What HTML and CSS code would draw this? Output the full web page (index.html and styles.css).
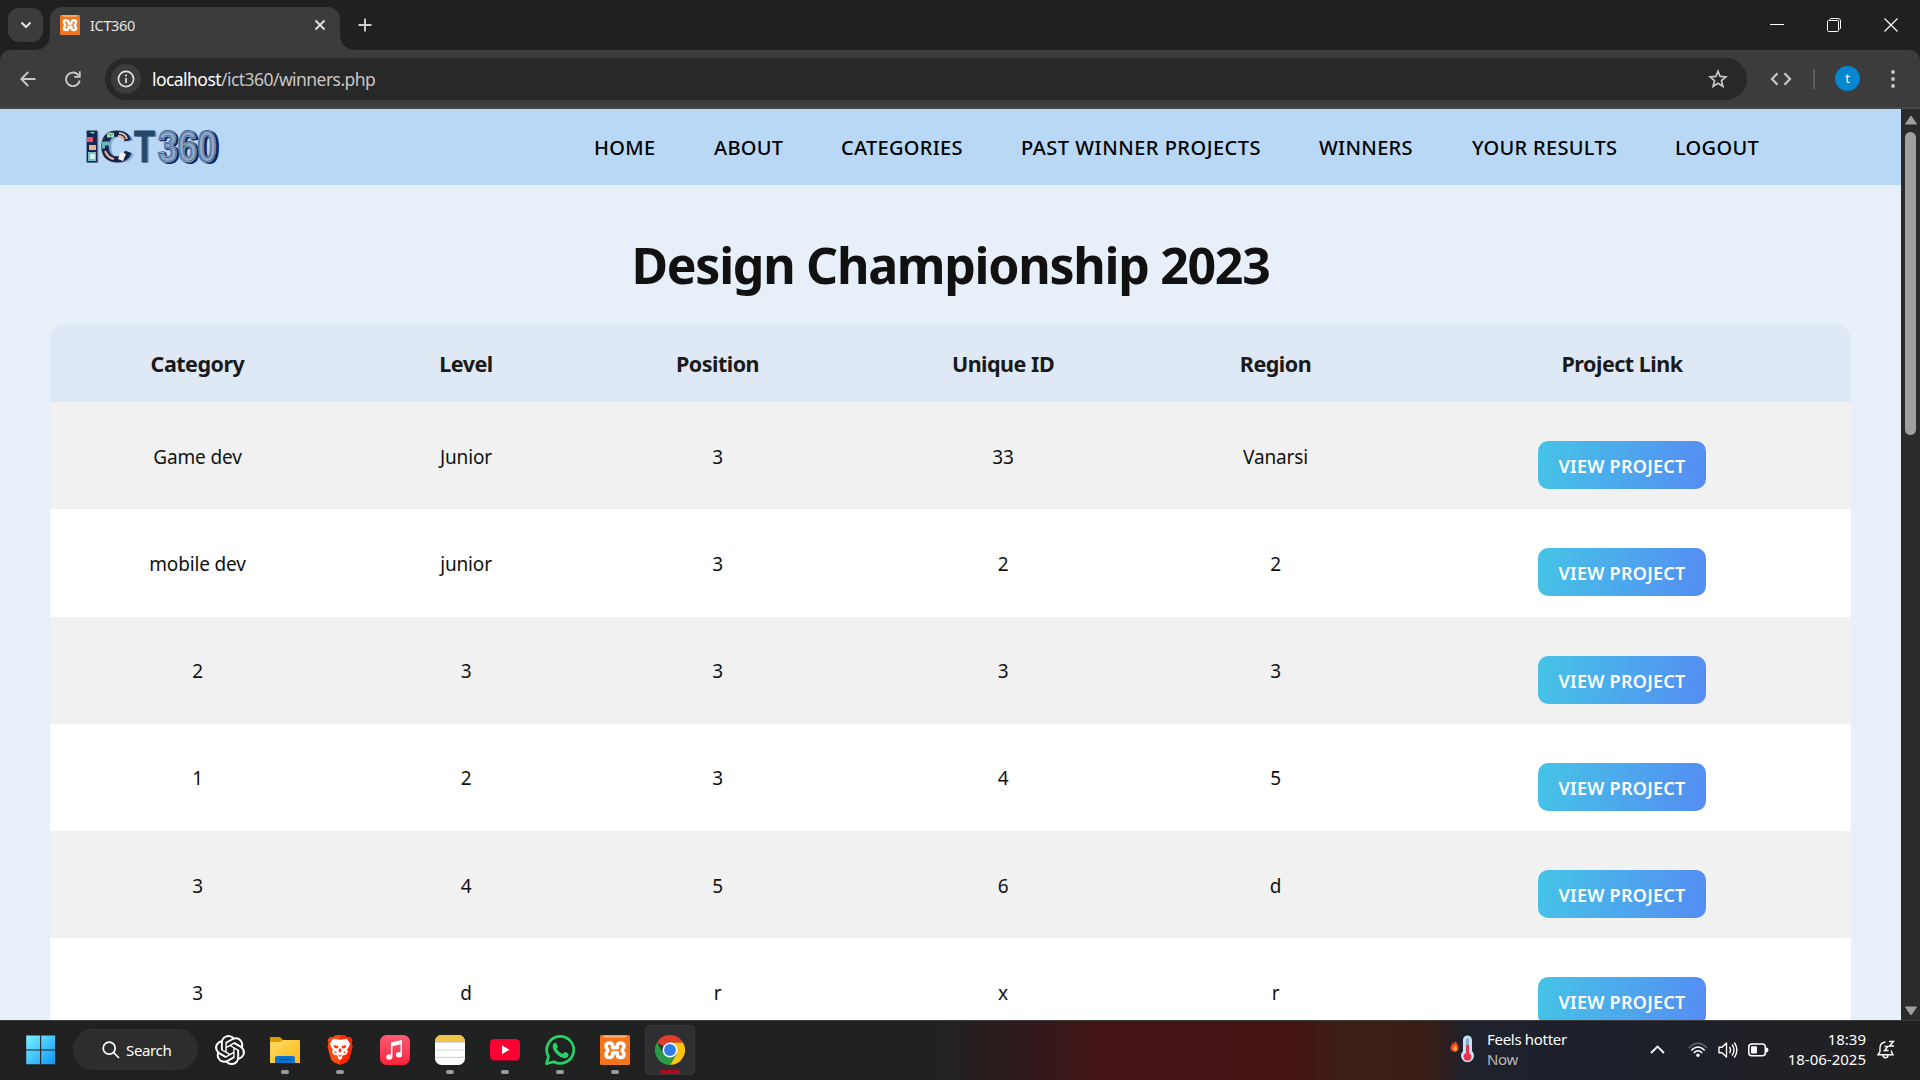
FILE: index.html
```html
<!DOCTYPE html>
<html lang="en">
<head>
<meta charset="utf-8">
<title>ICT360</title>
<link rel="stylesheet" href="styles.css">
</head>
<body>
<header class="tabstrip">
  <button class="tab-search" aria-label="Search tabs"><svg width="12" height="8" viewBox="0 0 12 8"><path d="M1.500 1.500 6 6 10.500 1.500" fill="none" stroke="#e3e3e3" stroke-width="2"/></svg></button>
  <div class="tab">
    <svg class="favicon" width="20" height="20" viewBox="0 0 30 30"><use href="#xampp"/></svg>
    <span class="tab-title">ICT360</span>
    <svg class="tab-close" width="12" height="12" viewBox="0 0 12 12"><path d="M1.5 1.5 10.5 10.5M10.5 1.5 1.5 10.5" stroke="#e3e3e3" stroke-width="1.8"/></svg>
  </div>
  <svg class="tab-new" width="14" height="14" viewBox="0 0 14 14"><path d="M7 .5V13.500M.5 7H13.500" stroke="#d0d0d0" stroke-width="1.9"/></svg>
  <div class="window-controls">
    <svg width="14" height="14" viewBox="0 0 14 14"><path d="M0 6.500H14" stroke="#fff"/></svg>
    <svg width="14" height="14" viewBox="0 0 14 14" fill="none" stroke="#fff"><path d="M3 2.500V1.500Q3 .5 4 .5H11Q13.500 .5 13.500 3V10Q13.500 11 12.500 11"/><rect x=".5" y="2.500" width="11" height="11" rx="1"/></svg>
    <svg width="14" height="14" viewBox="0 0 14 14"><path d="M.5 .5 13.500 13.500M13.500 .5 .5 13.500" stroke="#fff" stroke-width="1.200"/></svg>
  </div>
</header>
<div class="toolbar">
  <svg class="back" width="16" height="16" viewBox="0 0 16 16" fill="none" stroke="#c7c7c7" stroke-width="1.900"><path d="M15.500 8H1.800M8.200 1 1.300 8 8.200 15"/></svg>
  <svg class="reload" width="16" height="16" viewBox="0 0 16 16"><path d="M13.600 4.600A6.800 6.800 0 1 0 14.600 9.500" fill="none" stroke="#c7c7c7" stroke-width="1.900"/><path d="M15.700 .3V6.800H9.200V5H13.900V.3Z" fill="#c7c7c7"/></svg>
  <div class="address">
    <span class="site-info"><svg width="18" height="18" viewBox="0 0 18 18"><circle cx="9" cy="9" r="7.600" fill="none" stroke="#e3e3e3" stroke-width="1.600"/><path d="M9 8V13" stroke="#e3e3e3" stroke-width="1.700"/><circle cx="9" cy="5.500" r="1.050" fill="#e3e3e3"/></svg></span>
    <span class="url"><b>localhost</b>/ict360/winners.php</span>
    <svg class="star" width="20" height="20" viewBox="0 0 20 20"><path d="M10 2.300 12.100 7.400 18 7.900 13.500 11.600 14.900 17.300 10 14.200 5.100 17.300 6.500 11.600 2 7.900 7.900 7.400Z" fill="none" stroke="#c7c7c7" stroke-width="1.700"/></svg>
  </div>
  <svg class="code" width="22" height="14" viewBox="0 0 22 14" fill="none" stroke="#c7c7c7" stroke-width="2.200"><path d="M7.500 1.200 2 7 7.500 12.800M14.500 1.200 20 7 14.500 12.800"/></svg>
  <span class="divider"></span>
  <span class="avatar">t</span>
  <svg class="kebab" width="6" height="20" viewBox="0 0 6 20" fill="#c7c7c7"><circle cx="3" cy="3" r="1.900"/><circle cx="3" cy="10" r="1.900"/><circle cx="3" cy="17" r="1.900"/></svg>
</div>

<div class="viewport">
<div class="page">
  <nav class="site-nav">
    <svg class="logo" width="152" height="60" viewBox="-6 -10 152 60" role="img" aria-label="ICT360">
      <g class="logo-shadow"><text x="-1" y="36" textLength="18" lengthAdjust="spacingAndGlyphs">I</text><text x="17" y="36" textLength="32" lengthAdjust="spacingAndGlyphs">C</text><text x="50" y="36" textLength="21" lengthAdjust="spacingAndGlyphs">T</text></g>
      <g class="logo-dark"><text x="-3" y="35" textLength="18" lengthAdjust="spacingAndGlyphs">I</text><text x="14" y="35" textLength="32" lengthAdjust="spacingAndGlyphs">C</text></g>
      <text class="logo-t" x="48" y="35" textLength="21" lengthAdjust="spacingAndGlyphs">T</text>
      <text class="logo-depth" x="73.500" y="36" textLength="60" lengthAdjust="spacingAndGlyphs">360</text>
      <text class="logo-num" x="72" y="34.500" textLength="59" lengthAdjust="spacingAndGlyphs">360</text>
      <text class="logo-line" x="72" y="34.500" textLength="59" lengthAdjust="spacingAndGlyphs">360</text>
      <path d="M3 5h6l-2 2z" fill="#7fc9b8"/><path d="M1 10h6v5H1z" fill="#e4576b"/><path d="M3 18h7v5H3z" fill="#e8b48b"/><path d="M2 25h8v9H2z" fill="#6cc5c3"/><path d="M4 27h5v5H4z" fill="#d8eee8"/>
      <path d="M21 5.500h7v5h-7z" fill="#9fe0b0"/><path d="m21 5.500 3.500 3 3.500-3" fill="none" stroke="#2a5560" stroke-width=".7"/><path d="M16 14.500h7v4h-4v3h-3z" fill="#63b9bd"/><path d="M19 24q3 7 9 8M33 6q6 0 8 6M32 9q5 0 6 4" fill="none" stroke="#e5b798" stroke-width="2"/><path d="m35 25 5 2-3 7-5-2z" fill="#f5f1ee"/>
    </svg>
    <ul class="links">
      <li class="l1">HOME</li><li class="l2">ABOUT</li><li class="l3">CATEGORIES</li><li class="l4">PAST WINNER PROJECTS</li><li class="l5">WINNERS</li><li class="l6">YOUR RESULTS</li><li class="l7">LOGOUT</li>
    </ul>
  </nav>
  <h1>Design Championship 2023</h1>
  <table class="winners">
    <colgroup><col class="c1"><col class="c2"><col class="c3"><col class="c4"><col class="c5"><col class="c6"></colgroup>
    <thead><tr><th>Category</th><th>Level</th><th>Position</th><th>Unique ID</th><th>Region</th><th>Project Link</th></tr></thead>
    <tbody>
      <tr><td>Game dev</td><td>Junior</td><td>3</td><td>33</td><td>Vanarsi</td><td><a class="view">VIEW PROJECT</a></td></tr>
      <tr><td>mobile dev</td><td>junior</td><td>3</td><td>2</td><td>2</td><td><a class="view">VIEW PROJECT</a></td></tr>
      <tr><td>2</td><td>3</td><td>3</td><td>3</td><td>3</td><td><a class="view">VIEW PROJECT</a></td></tr>
      <tr><td>1</td><td>2</td><td>3</td><td>4</td><td>5</td><td><a class="view">VIEW PROJECT</a></td></tr>
      <tr><td>3</td><td>4</td><td>5</td><td>6</td><td>d</td><td><a class="view">VIEW PROJECT</a></td></tr>
      <tr><td>3</td><td>d</td><td>r</td><td>x</td><td>r</td><td><a class="view">VIEW PROJECT</a></td></tr>
    </tbody>
  </table>
</div>
<div class="scrollbar">
  <svg width="14" height="10" viewBox="0 0 14 10"><path d="M7 1 12.500 9H1.500Z" fill="#9f9f9f" stroke="#9f9f9f" stroke-linejoin="round"/></svg>
  <span class="thumb"></span>
  <svg class="down" width="14" height="10" viewBox="0 0 14 10"><path d="M7 9 12.500 1H1.500Z" fill="#9f9f9f" stroke="#9f9f9f" stroke-linejoin="round"/></svg>
</div>
</div>

<footer class="taskbar">
  <svg class="start" width="30" height="30" viewBox="0 0 30 30"><defs><linearGradient id="win" x1="0" y1="0" x2="30" y2="30" gradientUnits="userSpaceOnUse"><stop offset="0" stop-color="#7df3ff"/><stop offset="1" stop-color="#0a93fa"/></linearGradient></defs><path d="M.2 .5h13.900v13.900H.2zM15.200 .5h13.900v13.900H15.200zM.2 15.400h13.900v13.900H.2zM15.200 15.400h13.900v13.900H15.200z" fill="url(#win)"/></svg>
  <div class="search"><svg width="18" height="18" viewBox="0 0 18 18" fill="none" stroke="#fff" stroke-width="1.700"><circle cx="7.200" cy="7.200" r="6"/><path d="m11.500 11.500 5.500 5.500"/></svg><span>Search</span></div>
  <div class="app"><svg width="30" height="30" viewBox="0 0 24 24" fill="#fff"><path d="M22.280 9.820a5.980 5.980 0 0 0-.520-4.910 6.050 6.050 0 0 0-6.510-2.900A6.070 6.070 0 0 0 4.980 4.180a5.980 5.980 0 0 0-4 2.900 6.050 6.050 0 0 0 .740 7.100 5.980 5.980 0 0 0 .510 4.910 6.050 6.050 0 0 0 6.520 2.900A5.980 5.980 0 0 0 13.260 24a6.060 6.060 0 0 0 5.770-4.210 5.990 5.990 0 0 0 4-2.900 6.060 6.060 0 0 0-.750-7.070zm-9.020 12.610a4.480 4.480 0 0 1-2.880-1.040l.140-.080 4.780-2.760a.8.8 0 0 0 .390-.680v-6.740l2.020 1.170a.07.07 0 0 1 .040.050v5.580a4.500 4.500 0 0 1-4.490 4.500zm-9.660-4.130a4.470 4.470 0 0 1-.530-3.010l.140.080 4.780 2.760a.77.77 0 0 0 .780 0l5.840-3.370v2.330a.08.08 0 0 1-.030.060L9.740 19.950a4.500 4.500 0 0 1-6.140-1.650zM2.340 7.900a4.490 4.490 0 0 1 2.370-1.970v5.680a.77.77 0 0 0 .390.680l5.810 3.350-2.020 1.170a.08.08 0 0 1-.070 0l-4.830-2.790A4.500 4.500 0 0 1 2.340 7.870zm16.600 3.860-5.840-3.390 2.020-1.160a.08.08 0 0 1 .070 0l4.830 2.790a4.490 4.490 0 0 1-.680 8.100v-5.680a.79.79 0 0 0-.400-.660zm2.010-3.030-.140-.080-4.770-2.780a.78.78 0 0 0-.790 0L9.410 9.230V6.900a.07.07 0 0 1 .030-.060l4.830-2.790a4.500 4.500 0 0 1 6.680 4.660zM8.310 12.860l-2.020-1.160a.08.08 0 0 1-.040-.060V6.070a4.500 4.500 0 0 1 7.380-3.450l-.140.080-4.780 2.760a.8.8 0 0 0-.390.680zm1.100-2.370 2.600-1.500 2.610 1.500v3l-2.600 1.500-2.610-1.500z"/></svg></div>
  <div class="app run"><svg width="30" height="30" viewBox="0 0 30 30"><defs><linearGradient id="fold" x2="1" y2="1"><stop stop-color="#ffdc66"/><stop offset="1" stop-color="#fbb916"/></linearGradient></defs><path d="M0 3q0-1 1-1h8q1 0 2 1l2 2v7H0z" fill="#dd9b00"/><path d="M0 8q0-1 1-1h9l3-2h16q1 0 1 1v22H0z" fill="url(#fold)"/><path d="M5 28v-5q0-2 2-2h16q2 0 2 2v5z" fill="#0c74ce"/><path d="M9 24.500h12" stroke="#0a4f93" stroke-width="1.200"/></svg></div>
  <div class="app run"><svg width="30" height="30" viewBox="0 0 30 30"><path d="m15 0 5 .2 2 2 3-.2 2.500 3-1 2.500 1 4-3.500 13-3 3-6 2.300L9 27.500l-3-3-3.500-13 1-4-1-2.500L5 2l3 .2 2-2z" fill="#ff4a10"/><path d="m15 0 5 .2 2 2 3-.2 2.500 3-1 2.500 1 4-3.500 13-3 3-6 2.300z" fill="#ff2500"/><path d="m15 4.800 7-1 3 5-1 3-2 3 1 2-2 3-4 1 .5 2-2.500 2.500L12.500 22.800l.5-2-4-1-2-3 1-2-2-3-1-3 3-5z" fill="#fff"/><path d="m8.500 10 5 1-.8 2.500-3-.5zM21.500 10l-5 1 .8 2.500 3-.5zM12.500 19l2.500 1.500 2.500-1.500-2.500 3zM14 13.500h2l.5 3-1.500 1-1.500-1zM9 16l3 1.500-2 .8zM21 16l-3 1.500 2 .8z" fill="#ff3310"/></svg></div>
  <div class="app"><svg width="30" height="30" viewBox="0 0 30 30"><defs><linearGradient id="mus" x2="0" y2="1"><stop stop-color="#fb5c74"/><stop offset="1" stop-color="#fa233b"/></linearGradient></defs><rect width="30" height="30" rx="6.500" fill="url(#mus)"/><path d="M21.300 6V19.500M11.700 8V21.500" fill="none" stroke="#fff" stroke-width="1.500"/><path d="m11 7.500 11-2.500v4L11 11.500z" fill="#fff"/><ellipse cx="9.300" cy="22" rx="3.100" ry="2.700" fill="#fff"/><ellipse cx="19" cy="19.700" rx="3.100" ry="2.700" fill="#fff"/></svg></div>
  <div class="app run"><svg width="30" height="30" viewBox="0 0 30 30"><defs><clipPath id="note"><rect width="30" height="30" rx="6.500"/></clipPath></defs><g clip-path="url(#note)"><path d="M0 0h30v30H0z" fill="#fff"/><path d="M0 0h30v7H0z" fill="#f0c548"/><path d="M0 7.500h30M0 15h30M0 22.300h30" stroke="#d5d5d5" stroke-width="1.200"/></g></svg></div>
  <div class="app run"><svg width="30" height="30" viewBox="0 0 30 30"><rect y="4" width="30" height="21.500" rx="4.500" fill="#ff0033"/><path d="m12 10.500 7.500 4.300-7.500 4.400z" fill="#fff"/></svg></div>
  <div class="app run"><svg width="30" height="30" viewBox="0 0 30 30"><path d="M1.500 28.700 3.500 21.500A13.500 13.500 0 1 1 8.800 26.700Z" fill="none" stroke="#25d366" stroke-width="2.700" stroke-linejoin="round"/><path d="M9.200 8q1-.8 2 0l1.600 3.600q.2.800-1.200 2.200 2.200 4 6 5.300l1.600-1.800q.5-.6 1.200-.2l3 1.600q.8 2.800-2.200 4.200-4 1.200-8.800-3.200Q7.300 15 7.700 11q.3-2 1.500-3z" fill="#25d366"/></svg></div>
  <div class="app run"><svg width="30" height="30" viewBox="0 0 30 30"><g id="xampp"><rect width="30" height="30" rx="1.500" fill="#f3761f"/><path d="M3 .5h24l-2 2H5z" fill="#ffb27a"/><path d="M12.700 12.700V10.800C12.700 7 6 7 6 11C6 13.300 7.800 13.600 7.800 15.200C7.800 16.800 6 17.200 6 19.500C6 23.500 12.700 23.500 12.700 19.500V17.700H17.300V19.500C17.300 23.500 24 23.500 24 19.500C24 17.200 22.200 16.800 22.200 15.200C22.200 13.600 24 13.300 24 11C24 7 17.300 7 17.300 10.800V12.700Z" fill="none" stroke="#fff" stroke-width="3.600" stroke-linejoin="round"/></g></svg></div>
  <div class="app active"><svg width="30" height="30" viewBox="0 0 30 30"><path d="M15 15 2 7.500A15 15 0 0 1 28 7.500H15Z" fill="#e33b2e"/><path d="M15 7.500H28A15 15 0 0 1 15 30L21.500 18.750Z" fill="#fcc314"/><path d="M2 7.500A15 15 0 0 0 15 30L21.500 18.750 15 15 8.500 18.750Z" fill="#2a9c48"/><circle cx="15" cy="15" r="7.500" fill="#fff"/><circle cx="15" cy="15" r="5.900" fill="#2f7de9"/></svg></div>
  <div class="weather">
    <svg width="24" height="30" viewBox="0 0 24 30"><path d="M5 17Q0 16 .5 11.500 2 10 2.500 7.500L4 9q.5-2 2-3 0 2 2 4 2 6-3 7" fill="#ee4a27"/><path d="M5 16q-2-1-2-3 2-1 2-3 2 2 2 4 0 1.500-2 2" fill="#ffb72a"/><path d="M13 5a4.500 4.500 0 0 1 9 0V16a6.500 6.500 0 1 1-9 0Z" fill="#c5e2fa"/><path d="M16 4.500a1.500 1.500 0 0 1 3 0V10H16z" fill="#8fa9c2"/><path d="M16 10h3v8a4 4 0 1 1-3 0z" fill="#e8344f"/></svg>
    <div class="weather-text"><span>Feels hotter</span><span class="muted">Now</span></div>
  </div>
  <div class="tray">
    <svg class="chev" width="15" height="9" viewBox="0 0 15 9"><path d="M1 8 7.500 1.500 14 8" fill="none" stroke="#fff" stroke-width="1.800"/></svg>
    <svg class="wifi" width="20" height="16" viewBox="0 0 20 16" fill="none" stroke="#fff" stroke-width="1.500"><path d="M1 6Q10-3.500 19 6" stroke="#666"/><path d="M3.300 8.500Q10 1.500 16.700 8.500M5.800 11Q10 6.500 14.200 11"/><circle cx="10" cy="13.300" r="1.700" fill="#fff" stroke="none"/></svg>
    <svg class="vol" width="20" height="18" viewBox="0 0 20 18" fill="none" stroke="#fff" stroke-width="1.400"><path d="M1 6.200H4L8.500 2V16L4 11.800H1Z" stroke-linejoin="round"/><path d="M11.500 6Q13.500 9 11.500 12M14 3.500Q18 9 14 14.500M16.300 1.500Q21.500 9 16.300 16.500"/></svg>
    <svg class="bat" width="21" height="14" viewBox="0 0 21 14"><rect x=".8" y="1" width="16.500" height="11.800" rx="3" fill="none" stroke="#fff" stroke-width="1.500"/><rect x="3" y="3.200" width="6" height="7.400" rx="1" fill="#fff"/><path d="M18 4.500q2.500 0 2.500 2.400T18 9.500z" fill="#fff"/></svg>
    <div class="clock"><span>18:39</span><span>18-06-2025</span></div>
    <svg class="bell" width="18" height="19" viewBox="0 0 18 19" fill="none" stroke="#fff" stroke-width="1.400"><path d="M8.500 2Q3 2.500 3 8V11.500L1 14.800H16L14.500 12V10.500M6 15q0 2.700 2.500 2.700T11 15"/><path d="M7.500 6.500H11L7.500 10.500H11.500M12 1.500H16.500L12.500 6H17"/></svg>
  </div>
</footer>
</body>
</html>
```
FILE: styles.css
```css
* { box-sizing: border-box; }
body { margin: 0; width: 1920px; height: 1080px; overflow: hidden; display: flex; flex-direction: column; font-family: "Noto Sans", "Open Sans", sans-serif; background: #1f2121; }
svg { display: block; flex: none; }

.tabstrip { height: 50px; flex: none; display: flex; align-items: center; background: #1f2121; padding: 0 7px 0 8px; }
.tab-search { width: 35px; height: 34px; border: 0; padding: 0; border-radius: 11px; background: #3c3c3c; display: grid; place-items: center; }
.tab { position: relative; align-self: flex-end; width: 290px; height: 43px; margin-left: 7px; padding: 0 14px 7px 10px; border-radius: 12px 12px 0 0; background: #3c3c3c; display: flex; align-items: center; }
.tab::before, .tab::after { content: ""; position: absolute; bottom: 0; width: 14px; height: 14px; }
.tab::before { left: -14px; background: radial-gradient(circle at 0 0, transparent 13.5px, #3c3c3c 14px); }
.tab::after { right: -14px; background: radial-gradient(circle at 100% 0, transparent 13.5px, #3c3c3c 14px); }
.tab-title { margin-left: 10px; font-size: 14.5px; letter-spacing: -.35px; color: #e3e3e3; }
.tab-close { margin-left: auto; }
.tab-new { margin-left: 18px; }
.window-controls { margin-left: auto; display: flex; gap: 43px; padding-right: 15px; }

.toolbar { height: 59px; flex: none; display: flex; align-items: center; background: #3c3c3c; border-radius: 10px 10px 0 0; border-bottom: 2px solid #474747; padding: 0 24px 0 20px; }
.reload { margin-left: 29px; }
.address { width: 1642px; height: 42px; margin-left: 24px; border-radius: 21px; background: #282828; display: flex; align-items: center; padding: 0 19px 0 6px; }
.site-info { width: 30px; height: 30px; border-radius: 50%; background: #3c3c3c; display: grid; place-items: center; }
.url { margin-left: 11px; font-size: 17.5px; letter-spacing: -.55px; color: #c7c7c7; }
.url b { font-weight: 400; color: #fff; }
.star { margin-left: auto; }
.code { margin-left: 23px; }
.divider { width: 2px; height: 20px; margin-left: 21px; background: #5e5e5e; }
.avatar { width: 25px; height: 25px; margin-left: 20px; border-radius: 50%; background: #0288d1; color: #fff; font-size: 13px; line-height: 24px; text-align: center; }
.kebab { margin-left: auto; }

.viewport { height: 911px; flex: none; display: flex; }
.page { width: 1901px; overflow: hidden; background: #e7f0f8; }
.site-nav { height: 76px; display: flex; align-items: center; justify-content: space-between; padding: 0 143px 0 80px; background: #b8d8f5; }
.logo text { font: bold 44px "Liberation Sans", Arial, sans-serif; }
.logo-shadow { fill: #8fa8c4; }
.logo-dark { fill: #152550; stroke: #152550; stroke-width: 1; }
.logo-t { fill: #24496a; stroke: #24496a; stroke-width: 1; }
.logo-depth { fill: #14265a; stroke: #14265a; stroke-width: 2; }
.logo-num { fill: #8ea9c9; stroke: #33507c; stroke-width: 2; }
.logo-line { fill: none; stroke: #a9c3e0; stroke-width: .6; }
.links { margin: 0; padding: 0; list-style: none; display: flex; gap: 58px; font-size: 20px; font-weight: 500; letter-spacing: .3px; color: #000; white-space: nowrap; }
.l1 { width: 62px; } .l2 { width: 69px; } .l3 { width: 122px; } .l4 { width: 240px; letter-spacing: .5px; } .l5 { width: 95px; } .l6 { width: 145px; } .l7 { width: 83px; }
h1 { margin: 46px 0 24px; height: 69px; line-height: 69px; font-size: 50px; font-weight: 700; letter-spacing: -1.28px; text-align: center; color: #111; }
.winners { width: 1801px; margin: 0 auto; table-layout: fixed; border-spacing: 0; border-radius: 16px 16px 0 0; overflow: hidden; text-align: center; }
.c1 { width: 295px; } .c2 { width: 242px; } .c3 { width: 261px; } .c4 { width: 310px; } .c5 { width: 235px; } .c6 { width: 458px; }
th { height: 78px; padding: 0; background: #dfe9f5; font-size: 21.5px; letter-spacing: -.5px; color: #1a1a1a; }
tbody tr { background: #fff; }
tbody tr:nth-child(odd) { background: #f1f1f1; }
td { height: 107.25px; padding: 2px 0 0; font-size: 19px; letter-spacing: -.15px; color: #111; }
.view { display: flex; align-items: center; justify-content: center; width: 168px; height: 48px; margin: 17px auto 0; padding-top: 2px; border-radius: 10px; background: linear-gradient(100deg, #45c4e6, #558cf3); color: #fff; font-size: 18px; font-weight: 600; letter-spacing: .25px; white-space: nowrap; }
.scrollbar { width: 19px; background: #2b2b2b; display: flex; flex-direction: column; align-items: center; padding: 6px 0 4px; }
.thumb { width: 11px; height: 303px; margin-top: 7px; border-radius: 6px; background: #9f9f9f; }
.down { margin-top: auto; }

.taskbar { height: 60px; flex: none; display: flex; align-items: center; padding: 0 25px 2px 26px; color: #fff; border-top: 1px solid #3b3d3f; background: linear-gradient(90deg, #202021 0, #202222 940px, #2d1b1c 1010px, #431316 1100px, #451315 1220px, #431414 1300px, #3d1e15 1340px, #3a1d14 1425px, #1f212b 1465px, #1d202b 1600px, #202125 1800px, #202021 1920px); }
.search { width: 125px; height: 41px; margin: 0 7px 0 17px; border-radius: 21px; background: #2d2d2d; border-top: 1px solid #363636; display: flex; align-items: center; padding-left: 29px; gap: 6px; font-size: 15px; letter-spacing: -.35px; }
.app { position: relative; width: 50px; height: 50px; margin-right: 5px; display: grid; place-items: center; border-radius: 5px; }
.run::after, .active::after { content: ""; position: absolute; left: 21px; bottom: 1px; width: 8px; height: 4px; border-radius: 2px; background: #9b9b9b; }
.active { background: #2f2f32; box-shadow: inset 0 0 0 1px #39393b; }
.active::after { left: 15px; width: 20px; background: #b00a1c; }
.weather { margin-left: 750px; display: flex; align-items: center; gap: 13px; font-size: 15px; letter-spacing: -.3px; line-height: 20px; }
.weather-text, .clock { display: flex; flex-direction: column; padding-bottom: 2px; }
.muted { color: #b9b9b9; }
.tray { margin-left: auto; display: flex; align-items: center; }
.wifi { margin-left: 23px; }
.vol { margin-left: 10px; }
.bat { margin-left: 10px; }
.clock { width: 80px; margin-left: 17px; align-items: flex-end; font-size: 15px; line-height: 20px; letter-spacing: 0; white-space: nowrap; }
.bell { margin-left: 11px; }
```
